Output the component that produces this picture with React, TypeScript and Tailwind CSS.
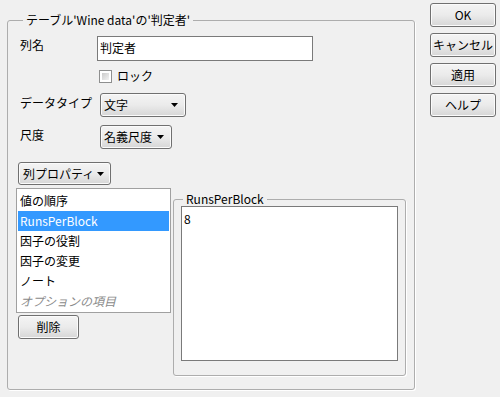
import React from "react";

const font = { fontFamily: '"Noto Sans CJK JP", "Noto Sans", sans-serif' };

function Arrow() {
  return (
    <svg width="7" height="4" viewBox="0 0 7 4" className="shrink-0">
      <path d="M0 0H7L3.5 4Z" fill="#000" />
    </svg>
  );
}

const base =
  "flex items-center rounded-[3px] border border-[#707070] bg-linear-to-b from-[#f4f4f4] via-[#ebebeb] to-[#d6d6d6] shadow-[inset_0_0_0_1px_#fbfbfb] text-[12px] leading-none text-black";
const btn = `${base} justify-center`;

function Combo({ label, width }: { label: string; width: string }) {
  return (
    <div className={`${base} ${width} h-[24px] justify-between pl-[3px] pr-[7px]`}>
      <span>{label}</span>
      <Arrow />
    </div>
  );
}

const items = ["値の順序", "RunsPerBlock", "因子の役割", "因子の変更", "ノート"];

export default function App() {
  return (
    <div
      className="flex h-[397px] w-[500px] bg-[#f0f0f0] text-[12px] text-black"
      style={font}
    >
      <fieldset className="ml-[7px] mt-[12px] h-[378px] w-[408px] rounded-[3px] border border-[#adadad] shadow-[1px_1px_0_#fff] pl-[10px]">
        <legend className="ml-[5px] px-[3px] leading-[16px]">
          テーブル'Wine data'の'判定者'
        </legend>

        <div className="mt-[8px] flex items-start">
          <span className="ml-[2px] mt-[1px] w-[77px] leading-[16px]">列名</span>
          <div className="h-[25px] w-[216px] border border-[#7a7a7a] bg-white pl-[2px] leading-[22px]">
            判定者
          </div>
        </div>

        <div className="ml-[81px] mt-[7px] flex items-center gap-[5px]">
          <div className="h-[13px] w-[13px] border border-[#8e8f8f] bg-white p-[2px]">
            <div className="h-full w-full bg-linear-to-br from-[#cbcbcb] to-[#f3f3f3]" />
          </div>
          <span className="leading-[16px]">ロック</span>
        </div>

        <div className="mt-[9px] flex items-start">
          <span className="ml-[2px] mt-[2px] w-[80px] leading-[16px]">データタイプ</span>
          <Combo label="文字" width="w-[86px]" />
        </div>

        <div className="mt-[8px] flex items-start">
          <span className="ml-[2px] mt-[2px] w-[80px] leading-[16px]">尺度</span>
          <Combo label="名義尺度" width="w-[72px]" />
        </div>

        <div className="mt-[13px]">
          <div className={`${base} h-[23px] w-[93px] justify-between pl-[4px] pr-[6px]`}>
            <span>列プロパティ</span>
            <Arrow />
          </div>
        </div>

        <div className="mt-[3px] flex items-start">
          <div className="-ml-[2px] flex flex-col">
            <div className="h-[125px] w-[155px] border border-[#a0a0a0] bg-white px-[1px] pt-[2px]">
              {items.map((it, i) => (
                <div
                  key={it}
                  className={`h-[20px] pl-[2px] leading-[20px] ${
                    i === 1 ? "bg-[#3399ff] text-white" : ""
                  }`}
                >
                  {it}
                </div>
              ))}
              <div className="h-[20px] pl-[2px] italic leading-[20px] text-[#8a8a8a]">
                オプションの項目
              </div>
            </div>
            <div className={`${btn} ml-[2px] mt-[2px] h-[24px] w-[61px]`}>削除</div>
          </div>

          <fieldset className="ml-[2px] mt-[4px] h-[184px] w-[233px] rounded-[3px] border border-[#adadad] shadow-[1px_1px_0_#fff] px-[7px]">
            <legend className="ml-[2px] px-[3px] leading-[14px]">RunsPerBlock</legend>
            <div className="h-[155px] w-[217px] border border-[#7a7a7a] bg-white pl-[2px] pt-[4px] leading-[16px]">
              8
            </div>
          </fieldset>
        </div>
      </fieldset>

      <div className="ml-[15px] mt-[3px] flex flex-col gap-[6px]">
        <div className={`${btn} h-[24px] w-[66px]`}>OK</div>
        <div className={`${btn} h-[24px] w-[66px] whitespace-nowrap`}>キャンセル</div>
        <div className={`${btn} h-[24px] w-[66px]`}>適用</div>
        <div className={`${btn} h-[24px] w-[66px]`}>ヘルプ</div>
      </div>
    </div>
  );
}
